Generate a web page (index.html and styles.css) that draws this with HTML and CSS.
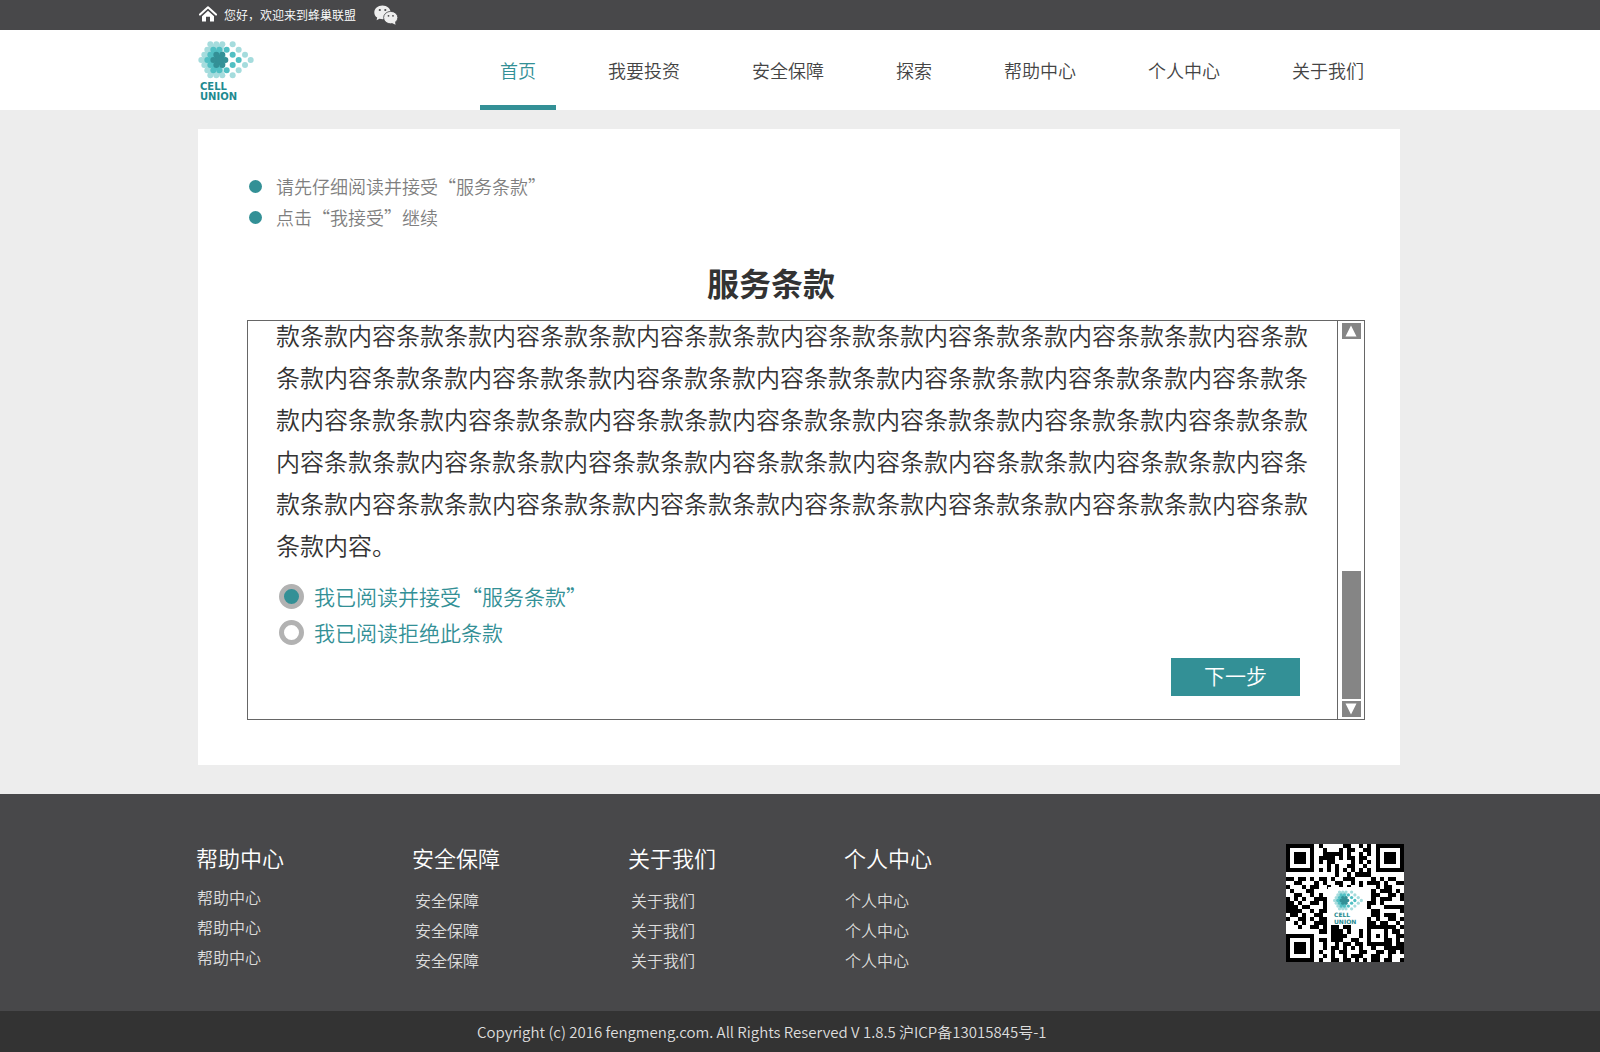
FILE: index.html
```html
<!DOCTYPE html>
<html lang="zh-CN">
<head>
<meta charset="utf-8">
<meta name="viewport" content="width=device-width, initial-scale=1">
<title>服务条款</title>
<link rel="stylesheet" href="styles.css">
</head>
<body>
<svg class="sprite" aria-hidden="true">
  <symbol id="cells" viewBox="54 122 166 114">
    <g fill="#a5dcdd">
      <path d="M90 132H126L146 179L126 225H90L63 179Z"/>
      <circle cx="90" cy="132" r="9"/><circle cx="108" cy="132" r="9"/><circle cx="126" cy="132" r="9"/>
      <circle cx="81" cy="148" r="9"/><circle cx="72" cy="163" r="9"/><circle cx="63" cy="179" r="9"/>
      <circle cx="72" cy="194" r="9"/><circle cx="81" cy="210" r="9"/>
      <circle cx="90" cy="225" r="9"/><circle cx="108" cy="225" r="9"/><circle cx="126" cy="225" r="9"/>
      <circle cx="157" cy="132" r="9"/><circle cx="175" cy="148" r="9"/><circle cx="194" cy="163" r="9"/>
      <circle cx="211" cy="179" r="9"/><circle cx="194" cy="194" r="9"/><circle cx="175" cy="210" r="9"/><circle cx="157" cy="225" r="9"/>
    </g>
    <path fill="#fff" d="M136 134L150 150V208L136 224L128 210L140 179L128 148Z"/>
    <g fill="#51bfc3">
      <path d="M99 148H118L136 179L118 210H99L81 179Z"/>
      <circle cx="99" cy="148" r="9"/><circle cx="117" cy="148" r="9"/><circle cx="90" cy="163" r="9"/>
      <circle cx="81" cy="179" r="9"/><circle cx="90" cy="194" r="9"/><circle cx="99" cy="210" r="9"/><circle cx="117" cy="210" r="9"/>
      <circle cx="139" cy="148" r="9"/><circle cx="157" cy="163" r="9"/><circle cx="175" cy="179" r="9"/>
      <circle cx="157" cy="194" r="9"/><circle cx="139" cy="210" r="9"/>
    </g>
    <g fill="#339096">
      <path d="M108 163H126L135 179L126 194H108L99 179Z"/>
      <circle cx="108" cy="163" r="9"/><circle cx="126" cy="163" r="9"/><circle cx="99" cy="179" r="9"/>
      <circle cx="135" cy="179" r="9"/><circle cx="108" cy="194" r="9"/><circle cx="126" cy="194" r="9"/>
    </g>
  </symbol>
</svg>

<div class="topbar">
  <div class="wrap topbar-inner">
    <a class="home" href="#" aria-label="首页">
      <svg width="18" height="16" viewBox="0 0 18 16"><path d="M1 8.600L9 1.200L17 8.600" fill="none" stroke="#fff" stroke-width="2" stroke-linecap="round" stroke-linejoin="round"/><path d="M9 4.800L15 10.300V15.600H11V10.800H7V15.600H3V10.300Z" fill="#fff"/></svg>
    </a>
    <span class="greeting">您好，欢迎来到蜂巢联盟</span>
    <a class="wechat" href="#" aria-label="微信">
      <svg width="24" height="20" viewBox="0 0 24 20"><path d="M8.500 0.500C3.800 0.500 0.300 3.600 0.300 7.400C0.300 9.600 1.400 11.400 3.200 12.600L2.600 15.300L5.500 13.700C6.500 14 7.500 14.200 8.700 14.200C12.900 14.200 16.600 11.200 16.600 7.300C16.600 3.500 13 0.500 8.500 0.500Z" fill="#eee"/><ellipse cx="16.700" cy="12.600" rx="7.100" ry="6.200" fill="#eee" stroke="#48484a" stroke-width=".8"/><path d="M18 18L21.500 19.700L20.900 16.500Z" fill="#eee"/><g fill="#48484a"><circle cx="5.800" cy="5" r="1.100"/><circle cx="11.300" cy="5" r="1.100"/><circle cx="14.500" cy="10.800" r=".9"/><circle cx="19" cy="10.800" r=".9"/></g></svg>
    </a>
  </div>
</div>

<header class="header">
  <div class="wrap header-inner">
    <a class="logo" href="#">
      <svg class="logo-mark" width="56" height="38" aria-hidden="true"><use href="#cells"/></svg>
      <span class="logo-name">CELL<br>UNION</span>
    </a>
    <nav class="nav">
      <a class="nav-link active" href="#">首页</a>
      <a class="nav-link" href="#">我要投资</a>
      <a class="nav-link" href="#">安全保障</a>
      <a class="nav-link" href="#">探索</a>
      <a class="nav-link" href="#">帮助中心</a>
      <a class="nav-link" href="#">个人中心</a>
      <a class="nav-link" href="#">关于我们</a>
    </nav>
  </div>
</header>

<main class="main">
  <div class="wrap">
    <section class="card">
      <ul class="steps">
        <li>请先仔细阅读并接受“服务条款”</li>
        <li>点击“我接受”继续</li>
      </ul>
      <h1 class="title">服务条款</h1>
      <div class="terms">
        <form class="terms-body">
          <p class="terms-text">款条款内容条款条款内容条款条款内容条款条款内容条款条款内容条款条款内容条款条款内容条款条款内容条款条款内容条款条款内容条款条款内容条款条款内容条款条款内容条款条款内容条款条款内容条款条款内容条款条款内容条款条款内容条款条款内容条款条款内容条款条款内容条款条款内容条款条款内容条款条款内容条款条款内容条款条款内容条款内容条款条款内容条款条款内容条款条款内容条款条款内容条款条款内容条款条款内容条款条款内容条款条款内容条款条款内容条款条款内容。</p>
          <label class="choice"><input type="radio" name="agree" value="yes" checked>我已阅读并接受“服务条款”</label>
          <label class="choice"><input type="radio" name="agree" value="no">我已阅读拒绝此条款</label>
          <button class="next" type="button">下一步</button>
        </form>
        <div class="scrollbar">
          <button class="arrow" type="button" aria-label="向上滚动"><svg width="12" height="12" viewBox="0 0 12 12"><path d="M6 0.500L11.500 11.500H0.500Z" fill="#fff"/></svg></button>
          <div class="thumb"></div>
          <button class="arrow" type="button" aria-label="向下滚动"><svg width="12" height="12" viewBox="0 0 12 12"><path d="M6 11.500L11.500 0.500H0.500Z" fill="#fff"/></svg></button>
        </div>
      </div>
    </section>
  </div>
</main>

<footer class="footer">
  <div class="footer-inner">
    <div class="col col-first">
      <h2>帮助中心</h2>
      <a href="#">帮助中心</a><a href="#">帮助中心</a><a href="#">帮助中心</a>
    </div>
    <div class="col">
      <h2>安全保障</h2>
      <a href="#">安全保障</a><a href="#">安全保障</a><a href="#">安全保障</a>
    </div>
    <div class="col">
      <h2>关于我们</h2>
      <a href="#">关于我们</a><a href="#">关于我们</a><a href="#">关于我们</a>
    </div>
    <div class="col col-last">
      <h2>个人中心</h2>
      <a href="#">个人中心</a><a href="#">个人中心</a><a href="#">个人中心</a>
    </div>
    <svg class="qr" width="118" height="118" viewBox="0 0 118 118" role="img" aria-label="二维码">
      <path id="qr-modules" transform="scale(4.069)" shape-rendering="crispEdges"/>
      <rect x="42" y="43" width="37" height="37" fill="#fff"/>
      <use href="#cells" x="47" y="46" width="30" height="21"/>
      <text class="qr-name" x="48" y="73">CELL</text>
      <text class="qr-name" x="48" y="80">UNION</text>
    </svg>
  </div>
</footer>
<div class="legal"><p class="wrap">Copyright (c) 2016 fengmeng.com. All Rights Reserved V 1.8.5 沪ICP备13015845号-1</p></div>
<script src="qr.js"></script>
</body>
</html>
```
FILE: styles.css
```css
* { box-sizing: border-box; }

body {
  margin: 0;
  background: #ededed;
  font-family: "Noto Sans CJK SC", sans-serif;
  font-weight: 350;
  color: #333;
}

a { color: inherit; text-decoration: none; }
h1, h2, p, ul { margin: 0; padding: 0; }
svg { display: block; }
button { border: 0; padding: 0; font: inherit; cursor: pointer; }

.sprite { position: absolute; width: 0; height: 0; }

.wrap {
  max-width: 1204px;
  margin: 0 auto;
  padding-right: 2px;
}

.topbar { background: #48484a; color: #fff; }
.topbar-inner { display: flex; align-items: center; height: 30px; }
.home { margin: 0 7px 2px 1px; }
.greeting { font-size: 12px; line-height: 28px; }
.wechat { margin-left: 18px; }

.header { background: #fff; }
.header-inner { display: flex; justify-content: space-between; height: 80px; }
.logo { padding-top: 11px; color: #1f8a90; }
.logo-name {
  display: block;
  margin: 3px 0 0 2px;
  font: bold 10px/10px "DejaVu Sans", sans-serif;
}
.nav { display: flex; gap: 32px; margin-right: 16px; }
.nav-link {
  padding: 0 20px;
  border-bottom: 5px solid transparent;
  font-size: 18px;
  line-height: 80px;
  color: #444;
}
.nav-link.active { color: #339096; border-color: #339096; }

.main { padding: 19px 0 29px; }
.card { padding: 42px 35px 45px 49px; background: #fff; }
.steps { list-style: none; font-size: 18px; line-height: 31px; color: #7f7f7f; }
.steps li { display: flex; align-items: center; gap: 14px; padding-left: 2px; }
.steps li::before {
  content: "";
  width: 13px;
  height: 13px;
  border-radius: 50%;
  background: #339096;
}
.title {
  margin: 25px 70px 14px 0;
  font-size: 32px;
  font-weight: 700;
  line-height: 48px;
  text-align: center;
}

.terms { display: flex; border: 1px solid #666; }
.terms-body {
  flex: 1;
  display: flex;
  flex-direction: column;
  padding: 0 29px 23px 28px;
}
.terms-text {
  margin: -7px 0 12px;
  font-size: 24px;
  line-height: 42px;
}
.choice {
  display: flex;
  align-items: center;
  gap: 10px;
  padding-left: 3px;
  font-size: 21px;
  line-height: 36px;
  color: #339096;
}
.choice input {
  appearance: none;
  width: 25px;
  height: 25px;
  margin: 0;
  border: 5px solid #b2b2b2;
  border-radius: 50%;
  background: #fff;
}
.choice input:checked { background: #339096; }
.next {
  align-self: flex-end;
  width: 129px;
  height: 38px;
  margin: 8px 8px 0 0;
  background: #339096;
  color: #fff;
  font-size: 21px;
  line-height: 34px;
  padding-bottom: 4px;
}
.scrollbar {
  display: flex;
  flex-direction: column;
  align-items: center;
  gap: 2px;
  width: 27px;
  padding: 2px 0;
  border-left: 1px solid #666;
}
.arrow {
  display: flex;
  align-items: center;
  justify-content: center;
  width: 19px;
  height: 16px;
  background: #858585;
}
.thumb { width: 19px; height: 128px; margin-top: auto; background: #858585; }

.footer { background: #48484a; color: #fff; }
.footer-inner {
  display: flex;
  align-items: flex-start;
  max-width: 1208px;
  margin: 0 auto;
  padding: 50px 0 36px;
}
.col { width: 216px; }
.col h2 { margin-bottom: 14px; font-size: 22px; font-weight: 350; line-height: 27px; }
.col a { display: block; padding-left: 3px; font-size: 16px; line-height: 30px; color: #ddd; }
.col-first h2 { margin-bottom: 11px; }
.col-first a, .col-last a { padding-left: 1px; }
.qr { margin-left: auto; background: #fff; }
.qr-name { font: bold 6px "DejaVu Sans", sans-serif; fill: #1f8a90; }

.legal { background: #333; color: #ddd; }
.legal p {
  padding-left: 279px;
  font-size: 15px;
  line-height: 41px;
}
```
FILE: qr.js
```js
// Rows of the code, one character per module: "#" is dark.
const rows = [
  "#######.#.....##..#.#.#######",
  "#.....#..#...#.##..##.#.....#",
  "#.###.#..#####.#..#.#.#.###.#",
  "#.###.#.####.#.##.##..#.###.#",
  "#.###.#.#.##....#.#.#.#.###.#",
  "#.....#...#.#..##..#..#.....#",
  "#######.#.#.#.#.#.#.#.#######",
  "............#..#.####........",
  "##.##.#.##.#..###....#.#.##..",
  "..##...#.#..##..#.#.###.#..##",
  "#...#.##..#..#.#..#...#.##...",
  ".#...##...........#..#.###.#.",
  "..##..#.#............##..##.#",
  "#.#.#..###...........#.###..#",
  "##.#..##.#..........##.#.....",
  "###.##...#..........#...#####",
  "####..#.##...........##.....#",
  ".##.#..##............##.###..",
  "#..##.#.##..........#.#..##.#",
  "..#.#..###..........##.##..#.",
  "...#..##.#.##.##....#######.#",
  "........##.###.#..#.#...#.##.",
  "#######....####...#.#.#.#..##",
  "#.....#.##.###..##..#...##.#.",
  "#.###.#..#..#.##.##.######.##",
  "#.###.#..#.##.#.#.#..#..#####",
  "#.###.#.#..#.##...##..##.##.#",
  "#.....#..#.#..#.###..##..#...",
  "#######.#..##.##.#.#.##.##..#",
];
const d = rows.map((row, y) =>
  [...row].map((c, x) => (c === "#" ? `M${x} ${y}h1v1h-1z` : "")).join("")
).join("");
document.getElementById("qr-modules").setAttribute("d", d);
```
